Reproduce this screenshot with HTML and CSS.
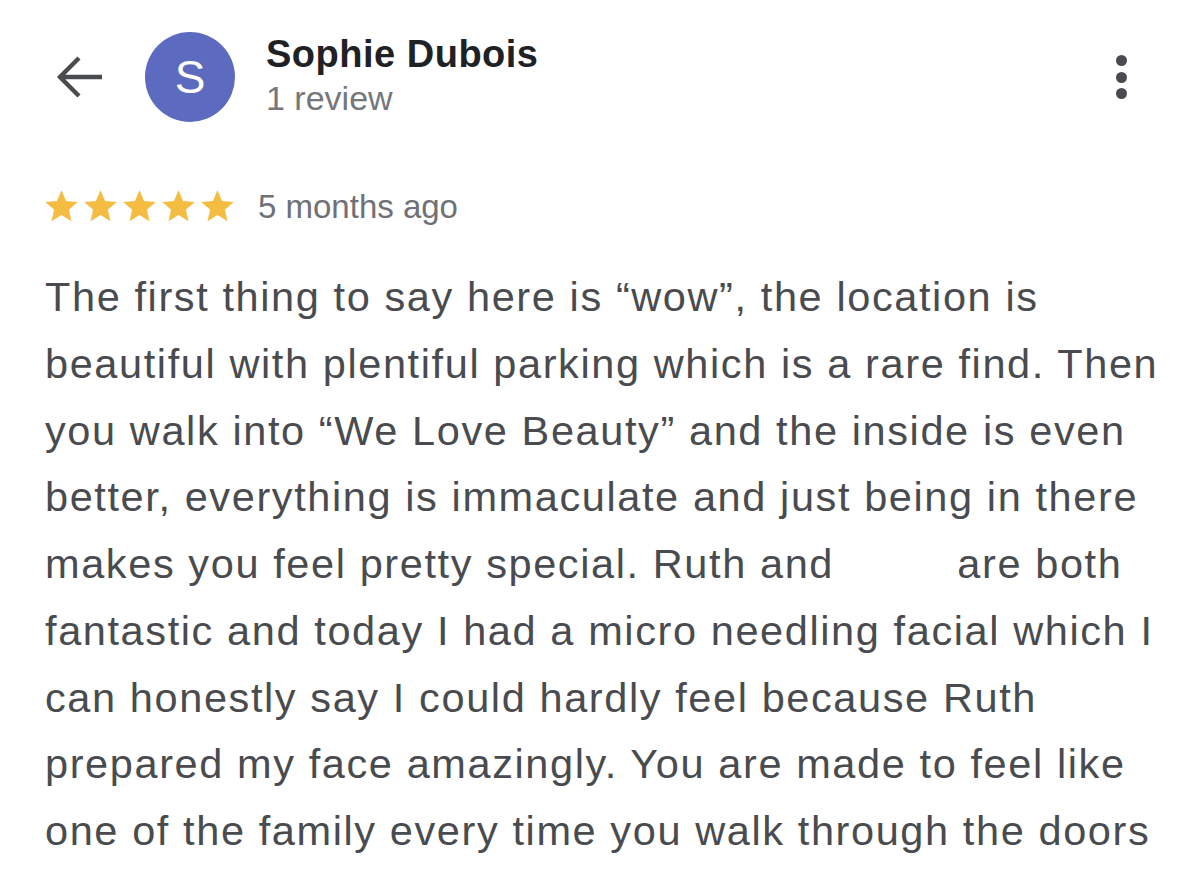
FILE: index.html
```html
<!DOCTYPE html>
<html lang="en">

<head>
    <meta charset="UTF-8">
    <meta name="viewport" content="width=device-width, initial-scale=1.0">
    <title>Review</title>
    <link rel="stylesheet" href="styles.css">
</head>

<body>
    <div class="review">
        <div class="header">
            <svg class="back" width="46" height="44" viewBox="0 0 46 44">
                <path d="M46 22H4M23 3L4 22l19 19" fill="none" stroke="#4a4b4f" stroke-width="4.4"/>
            </svg>
            <div class="avatar">S</div>
            <div class="who">
                <div class="name">Sophie Dubois</div>
                <div class="count">1 review</div>
            </div>
            <div class="more">
                <span></span>
                <span></span>
                <span></span>
            </div>
        </div>
        <div class="rating">
            <div class="stars">
                <svg viewBox="0 0 24 24"><path d="M12 17.27L18.18 21l-1.64-7.03L22 9.24l-7.19-.61L12 2 9.19 8.63 2 9.24l5.46 4.73L5.82 21z"/></svg>
                <svg viewBox="0 0 24 24"><path d="M12 17.27L18.18 21l-1.64-7.03L22 9.24l-7.19-.61L12 2 9.19 8.63 2 9.24l5.46 4.73L5.82 21z"/></svg>
                <svg viewBox="0 0 24 24"><path d="M12 17.27L18.18 21l-1.64-7.03L22 9.24l-7.19-.61L12 2 9.19 8.63 2 9.24l5.46 4.73L5.82 21z"/></svg>
                <svg viewBox="0 0 24 24"><path d="M12 17.27L18.18 21l-1.64-7.03L22 9.24l-7.19-.61L12 2 9.19 8.63 2 9.24l5.46 4.73L5.82 21z"/></svg>
                <svg viewBox="0 0 24 24"><path d="M12 17.27L18.18 21l-1.64-7.03L22 9.24l-7.19-.61L12 2 9.19 8.63 2 9.24l5.46 4.73L5.82 21z"/></svg>
            </div>
            <span class="when">5 months ago</span>
        </div>
        <p class="text">
            The first thing to say here is “wow”, the location is<br>
            beautiful with plentiful parking which is a rare find. Then<br>
            you walk into “We Love Beauty” and the inside is even<br>
            better, everything is immaculate and just being in there<br>
            makes you feel pretty special. Ruth and <span class="hidden"></span> are both<br>
            fantastic and today I had a micro needling facial which I<br>
            can honestly say I could hardly feel because Ruth<br>
            prepared my face amazingly. You are made to feel like<br>
            one of the family every time you walk through the doors
        </p>
    </div>
</body>

</html>
```
FILE: styles.css
```css
* {
    margin: 0;
    padding: 0;
}

body {
    background: #fff;
    font-family: "Liberation Sans", Arial, sans-serif;
    overflow: hidden;
}

.review {
    padding: 32px 0 0 45px;
}

.header {
    display: flex;
    align-items: center;
    height: 90px;
}

.back {
    margin-left: 11px;
    margin-right: 43px;
}

.avatar {
    width: 90px;
    height: 90px;
    border-radius: 50%;
    background-color: #5c6bc0;
    color: #fff;
    font-size: 46px;
    line-height: 90px;
    text-align: center;
}

.who {
    align-self: flex-start;
    margin-left: 31px;
}

.name {
    font-size: 38px;
    font-weight: bold;
    color: #202124;
    line-height: 44px;
    letter-spacing: 0.5px;
}

.count {
    margin-top: 2px;
    font-size: 34px;
    color: #75777b;
    line-height: 40px;
}

.more {
    margin-left: auto;
    margin-right: 73px;
    display: flex;
    flex-direction: column;
    gap: 5.5px;
}

.more span {
    width: 11px;
    height: 11px;
    border-radius: 50%;
    background-color: #4a4b4f;
}

.rating {
    display: flex;
    align-items: center;
    margin-top: 65px;
    margin-left: -3px;
}

.stars {
    display: flex;
}

.stars svg {
    width: 39px;
    height: 39px;
    fill: #f4bd42;
}

.when {
    margin-left: 21px;
    font-size: 33px;
    line-height: 39px;
    color: #6f7176;
}

.text {
    margin-top: 38px;
    font-size: 41.5px;
    line-height: 66.75px;
    letter-spacing: 1.6px;
    color: #4a4b4f;
    white-space: nowrap;
}

.hidden {
    display: inline-block;
    width: 97px;
}
```
